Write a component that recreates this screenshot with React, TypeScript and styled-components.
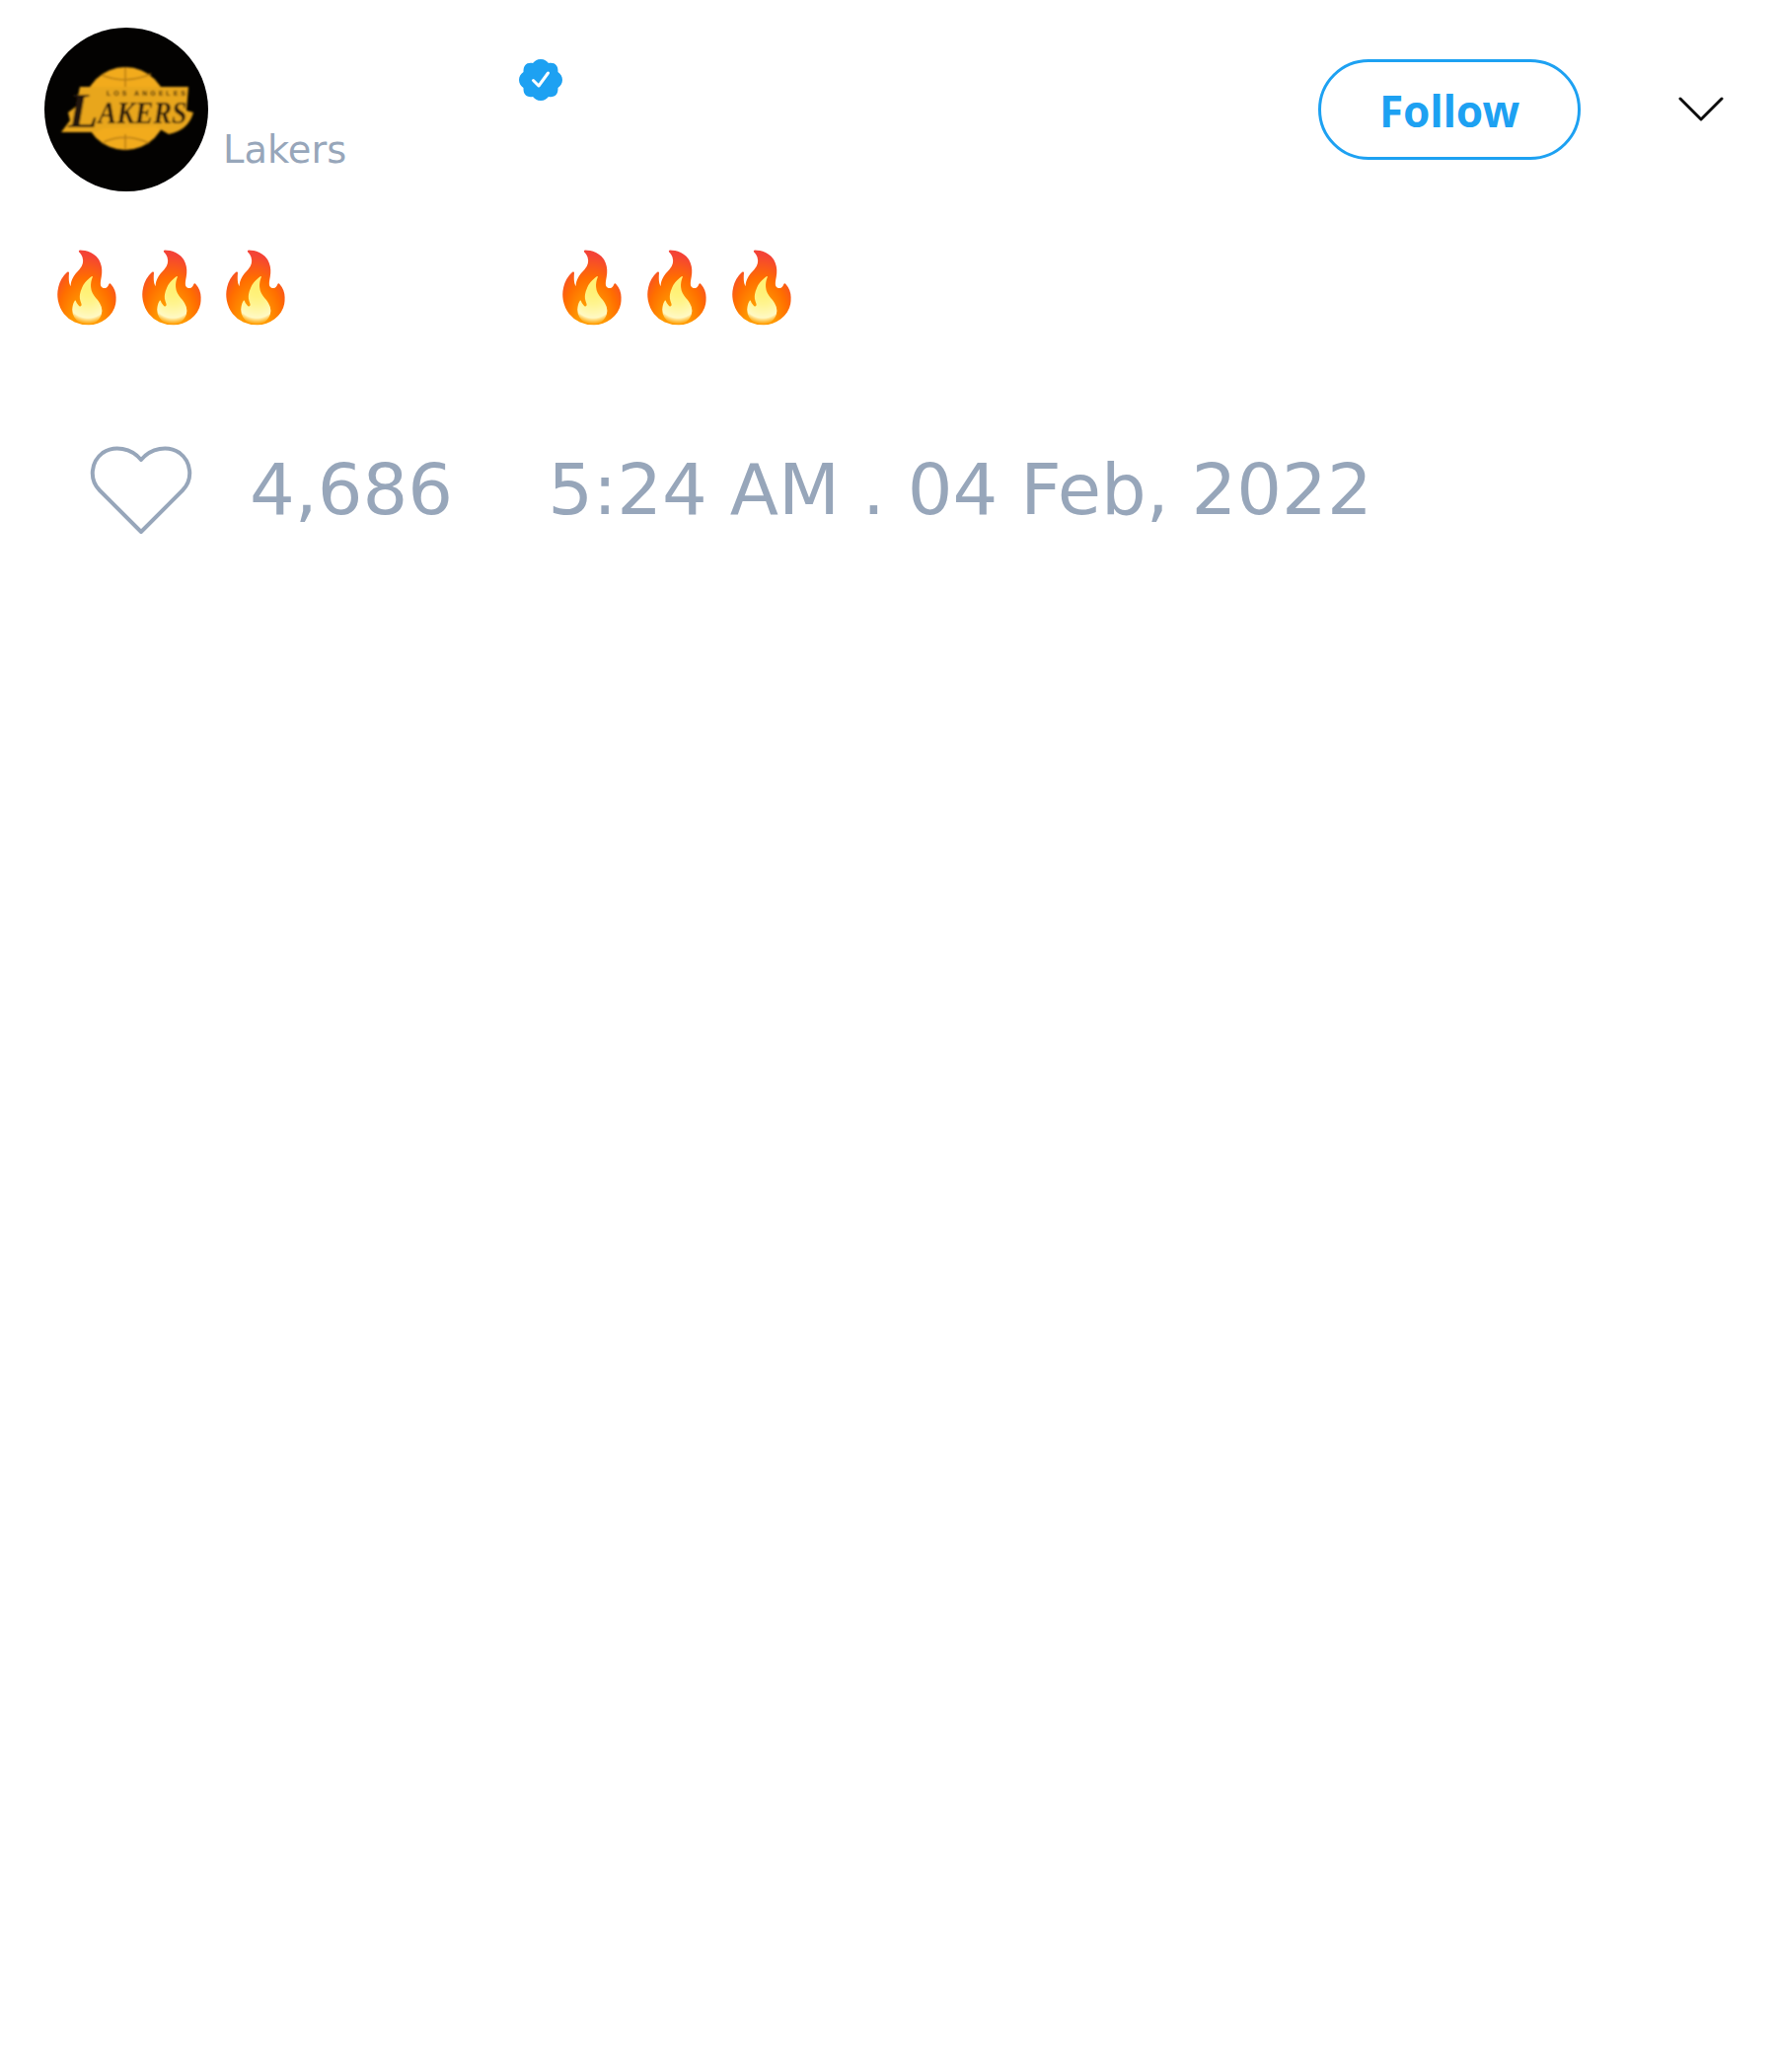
import React from 'react';
import styled, { createGlobalStyle } from 'styled-components';

const GlobalStyle = createGlobalStyle`
  html, body {
    margin: 0;
    padding: 0;
    background: #fff;
    font-family: "DejaVu Sans", sans-serif;
  }
`;

const LakersLogo = () => (
  <svg width="166" height="166" viewBox="0 0 166 166">
    <defs>
      <filter id="soft"><feGaussianBlur stdDeviation="0.8" /></filter>
    </defs>
    <circle cx="83" cy="83" r="83" fill="#030201" />
    <g filter="url(#soft)">
      <circle cx="82" cy="82" r="42" fill="#f2ab1e" />
      <path d="M82 40 V60 M58 48 Q82 58 108 47 M82 108 V124 M60 116 Q82 106 106 117" stroke="#b67c12" strokeWidth="1.500" fill="none" />
      <path d="M36 60 L146 60 L144 84 L151 86 Q146 104 126 108 L112 100 L60 102 L52 106 L17 106 L26 94 L24 86 L32 80 Z" fill="#e8a61e" />
      <text x="103" y="69" textAnchor="middle" fontFamily="Liberation Sans" fontWeight="700" fontSize="7" textLength="80" fill="#3a2508">LOS ANGELES</text>
      <text x="24" y="101" fontFamily="Liberation Serif" fontStyle="italic" fontWeight="700" fill="#24150a">
        <tspan fontSize="50">L</tspan>
        <tspan fontSize="32" dy="-4" textLength="90" lengthAdjust="spacingAndGlyphs">AKERS</tspan>
      </text>
    </g>
  </svg>
);

const VerifiedBadge = () => (
  <svg width="44" height="44" viewBox="0 0 44 44">
    <path
      fill="#1da1f2"
      d="M22 1 C26 1 28 3 30 5 C33 4.500 36.500 5 38 7.500 C39.500 9.500 39.500 12 39.500 14 C42 15.500 44 18.500 44 22 C44 25.500 42 28.500 39.500 30 C39.500 32 39.500 34.500 38 36.500 C36.500 39 33 39.500 30 39 C28 41 26 43 22 43 C18 43 16 41 14 39 C11 39.500 7.500 39 6 36.500 C4.500 34.500 4.500 32 4.500 30 C2 28.500 0 25.500 0 22 C0 18.500 2 15.500 4.500 14 C4.500 12 4.500 9.500 6 7.500 C7.500 5 11 4.500 14 5 C16 3 18 1 22 1 Z"
    />
    <path d="M14.500 22.500 L20 28 L29.500 15" fill="none" stroke="#fff" strokeWidth="3" strokeLinecap="round" strokeLinejoin="round" />
  </svg>
);

const HeartIcon = () => (
  <svg width="104" height="92" viewBox="0 0 104 92">
    <path
      d="M52 88 L10 46 C-1 35 1 17 13 8 C25 0 42 3 52 15 C62 3 79 0 91 8 C103 17 105 35 94 46 Z"
      fill="none"
      stroke="#97a6ba"
      strokeWidth="4"
      strokeLinejoin="round"
    />
  </svg>
);

const ChevronIcon = () => (
  <svg width="46" height="26" viewBox="0 0 46 26">
    <path d="M2 2 L23 23 L44 2" fill="none" stroke="#0c0c0c" strokeWidth="3" strokeLinecap="round" strokeLinejoin="round" />
  </svg>
);

const App: React.FC = () => (
  <Page>
    <GlobalStyle />
    <Header>
      <Avatar><LakersLogo /></Avatar>
      <NameBlock>
        <NameRow><VerifiedBadge /></NameRow>
        <Handle>Lakers</Handle>
      </NameBlock>
      <FollowButton>Follow</FollowButton>
      <MenuButton><ChevronIcon /></MenuButton>
    </Header>
    <TweetText>
      <EmojiGroup>🔥🔥🔥</EmojiGroup>
      <EmojiGroup>🔥🔥🔥</EmojiGroup>
    </TweetText>
    <Stats>
      <HeartIcon />
      <StatText $gap={58}>4,686</StatText>
      <StatText $gap={96}>5:24 AM . 04 Feb, 2022</StatText>
    </Stats>
  </Page>
);

const Page = styled.div`
  width: 1800px;
  height: 2100px;
  box-sizing: border-box;
  padding: 28px 0 0 45px;
  background: #fff;
`;

const Header = styled.header`
  display: flex;
  align-items: flex-start;
`;

const Avatar = styled.div`
  width: 166px;
  height: 166px;
  flex-shrink: 0;
`;

const NameBlock = styled.div`
  display: flex;
  flex-direction: column;
  width: 1125px;
  padding: 31px 0 0 15px;
  box-sizing: border-box;
`;

const NameRow = styled.div`
  display: flex;
  justify-content: flex-start;
  padding-left: 300px;
  height: 44px;
`;

const Handle = styled.span`
  font-size: 38.4px;
  line-height: 44px;
  margin-top: 27px;
  color: #97a6ba;
`;

const FollowButton = styled.button`
  width: 266px;
  height: 102px;
  margin-top: 32px;
  padding: 2px 0 0;
  border: 3px solid #1da1f2;
  border-radius: 51px;
  background: #fff;
  color: #1da1f2;
  font-family: "Noto Sans", sans-serif;
  font-size: 44px;
  font-weight: 700;
`;

const MenuButton = styled.div`
  display: flex;
  margin: 70px 0 0 99px;
`;

const TweetText = styled.div`
  display: flex;
  gap: 255px;
  margin-top: 48px;
  font-size: 69px;
  line-height: 100px;
  font-family: "Noto Color Emoji", "DejaVu Sans", sans-serif;
`;

const EmojiGroup = styled.span`
  display: block;
`;

const Stats = styled.div`
  display: flex;
  align-items: center;
  margin: 109px 0 0 46px;
`;

const StatText = styled.span<{ $gap: number }>`
  margin-left: ${props => props.$gap}px;
  padding-bottom: 2px;
  font-size: 72px;
  line-height: 90px;
  color: #97a6ba;
`;

export default App;
